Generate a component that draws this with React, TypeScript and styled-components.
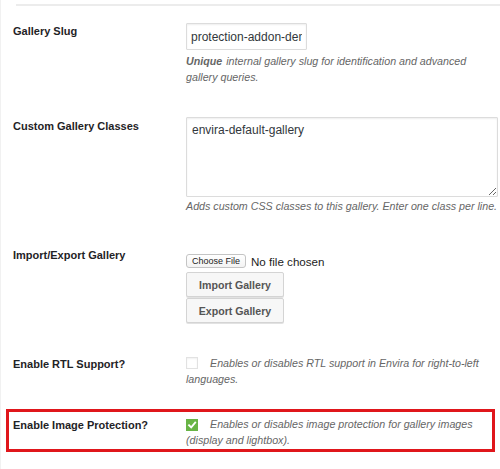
import React from "react";
import styled, { createGlobalStyle } from "styled-components";

const GlobalStyle = createGlobalStyle`
  html, body {
    margin: 0;
    padding: 0;
    background: #fff;
  }
  body {
    font-family: "Liberation Sans", Arial, Helvetica, sans-serif;
    color: #23282d;
  }
`;

const Page = styled.div`
  width: 500px;
  height: 469px;
  overflow: hidden;
  border-left: 1px solid #f1f1f1;
  box-sizing: border-box;
`;

const Divider = styled.div`
  height: 2px;
  margin: 4px 0 0 15px;
  background: #ececec;
`;

const Row = styled.div`
  display: grid;
  grid-template-columns: 173px 1fr;
  padding: 16px 0 16px 12px;
`;

const HighlightRow = styled(Row)`
  margin: 6px 5px 0 5px;
  padding: 4px 0 1px 4px;
  border: 3px solid #e0161b;
`;

const Label = styled.div`
  font-size: 11px;
  font-weight: bold;
  line-height: 16px;
  padding-top: 1px;
  color: #1f2326;
`;

const Field = styled.div`
  min-width: 0;
`;

const TextInput = styled.input`
  display: block;
  box-sizing: border-box;
  width: 121px;
  height: 27px;
  margin: 1px 0 0;
  padding: 0 4px;
  border: 1px solid #dcdcdc;
  border-radius: 1px;
  box-shadow: inset 0 1px 2px rgba(0, 0, 0, 0.07);
  font-family: "Liberation Sans", Arial, sans-serif;
  font-size: 12px;
  color: #32373c;
  background: #fff;
  outline: none;
`;

const TextArea = styled.textarea`
  display: block;
  box-sizing: border-box;
  width: 312px;
  height: 80px;
  margin: 0;
  padding: 4px 5px;
  border: 1px solid #dcdcdc;
  border-radius: 1px;
  box-shadow: inset 0 1px 2px rgba(0, 0, 0, 0.07);
  font-family: "Liberation Sans", Arial, sans-serif;
  font-size: 12px;
  line-height: 16px;
  color: #32373c;
  resize: vertical;
  outline: none;
`;

const Description = styled.p<{ $gap?: number; $max?: number }>`
  margin: ${(p) => p.$gap ?? 0}px 0 0;
  max-width: ${(p) => (p.$max ? `${p.$max}px` : "none")};
  font-size: 10.7px;
  line-height: 16px;
  font-style: italic;
  color: #666;

  b {
    padding-right: 1px;
  }
`;

const FileLine = styled.div`
  display: flex;
  align-items: center;
  gap: 5px;
  height: 16px;
  margin-top: 7px;
`;

const ChooseButton = styled.span`
  display: inline-flex;
  align-items: center;
  justify-content: center;
  box-sizing: border-box;
  width: 60px;
  height: 14px;
  border: 1px solid #c4c4c4;
  border-radius: 3px;
  background: linear-gradient(#fff, #f3f3f3);
  font-size: 9px;
  color: #222;
`;

const FileStatus = styled.span`
  font-size: 11.6px;
  color: #222;
`;

const ButtonStack = styled.div`
  display: flex;
  flex-direction: column;
  gap: 1px;
  margin-top: 3px;
`;

const ActionButton = styled.button`
  box-sizing: border-box;
  width: 98px;
  height: 25px;
  padding: 0;
  border: 1px solid #d4d4d4;
  border-radius: 2px;
  background: #f7f7f7;
  box-shadow: 0 1px 0 #e2e2e2;
  font-family: "Liberation Sans", Arial, sans-serif;
  font-size: 10.6px;
  font-weight: bold;
  color: #555;
`;

const CheckText = styled.p`
  margin: 0;
  font-size: 10.7px;
  line-height: 16px;
  font-style: italic;
  color: #666;
`;

const Check = styled.span<{ $on?: boolean }>`
  display: inline-flex;
  align-items: center;
  justify-content: center;
  box-sizing: border-box;
  width: 12px;
  height: 12px;
  margin-right: 12px;
  vertical-align: -2px;
  background: ${(p) => (p.$on ? "#68b445" : "#fff")};
  border: 1px solid ${(p) => (p.$on ? "#68b445" : "#e2e2e2")};
  box-shadow: ${(p) => (p.$on ? "none" : "inset 0 1px 2px rgba(0,0,0,0.06)")};
`;

const Tick = () => (
  <svg width="10" height="10" viewBox="0 0 10 10">
    <polyline
      points="2,5.2 4.2,7.4 8.2,2.6"
      fill="none"
      stroke="#fff"
      strokeWidth="1.8"
      strokeLinecap="square"
    />
  </svg>
);

export default function App() {
  return (
    <Page>
      <GlobalStyle />
      <Divider />

      <Row>
        <Label>Gallery Slug</Label>
        <Field>
          <TextInput readOnly value="protection-addon-demo" />
          <Description $gap={3} $max={295}>
            <b>Unique </b>internal gallery slug for identification and advanced
            gallery queries.
          </Description>
        </Field>
      </Row>

      <Row>
        <Label>Custom Gallery Classes</Label>
        <Field>
          <TextArea readOnly value="envira-default-gallery" />
          <Description $gap={1}>
            Adds custom CSS classes to this gallery. Enter one class per line.
          </Description>
        </Field>
      </Row>

      <Row>
        <Label>Import/Export Gallery</Label>
        <Field>
          <FileLine>
            <ChooseButton>Choose File</ChooseButton>
            <FileStatus>No file chosen</FileStatus>
          </FileLine>
          <ButtonStack>
            <ActionButton type="button">Import Gallery</ActionButton>
            <ActionButton type="button">Export Gallery</ActionButton>
          </ButtonStack>
        </Field>
      </Row>

      <Row>
        <Label>Enable RTL Support?</Label>
        <Field>
          <CheckText>
            <Check />
            Enables or disables RTL support in Envira for right-to-left
            languages.
          </CheckText>
        </Field>
      </Row>

      <HighlightRow>
        <Label>Enable Image Protection?</Label>
        <Field>
          <CheckText>
            <Check $on>
              <Tick />
            </Check>
            Enables or disables image protection for gallery images (display
            and lightbox).
          </CheckText>
        </Field>
      </HighlightRow>
    </Page>
  );
}
